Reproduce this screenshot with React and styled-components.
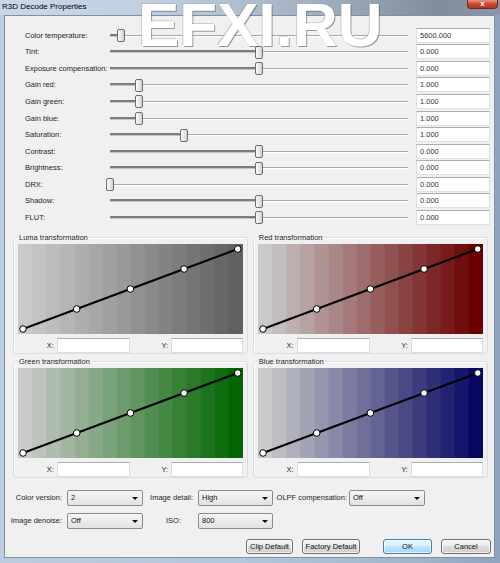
import React from "react";
import styled, { createGlobalStyle } from "styled-components";

const GlobalStyle = createGlobalStyle`
  html, body { margin: 0; padding: 0; background: #fff; }
  body { font-family: "Liberation Sans", Arial, sans-serif; color: #1e1e1e; }
`;

const Window = styled.div`
  position: relative;
  width: 500px;
  height: 563px;
  box-sizing: border-box;
  display: flex;
  flex-direction: column;
  overflow: hidden;
  background: linear-gradient(to right, #bccde1 0%, #b3c5da 50%, #9fb3ca 85%, #8ea3bd 100%);
`;

const TitleBar = styled.div`
  height: 15px;
  flex: none;
  display: flex;
  align-items: flex-start;
  padding: 0 2px 0 2px;
  background: linear-gradient(to right, #c9d7e7 0%, #c0cfe1 30%, #a3b1c1 62%, #7f8c9b 88%, #8a98a9 100%);
`;

const Title = styled.span`
  font-size: 8px;
  line-height: 14px;
  color: #000;
`;

const CloseButton = styled.div`
  margin-left: auto;
  width: 31px;
  height: 9px;
  box-sizing: border-box;
  border: 1px solid #6b2a22;
  border-top: none;
  border-radius: 0 0 4px 4px;
  background: linear-gradient(#e8917f, #c8432e 55%, #b53421);
  color: #fff;
  font-size: 8px;
  font-weight: bold;
  line-height: 8px;
  text-align: center;
`;

const Watermark = styled.div`
  position: absolute;
  left: 138px;
  top: -6px;
  font-size: 62px;
  line-height: 62px;
  font-weight: bold;
  color: #fff;
  text-shadow: 1px 1px 0 rgba(80, 80, 80, 0.55), -1px -1px 0 rgba(170, 170, 170, 0.5);
  pointer-events: none;
  white-space: nowrap;
`;

const Client = styled.div`
  flex: 1;
  margin: 0 5px 5px 4px;
  border: 1px solid #7e90a7;
  background: #f0f0f0;
  display: flex;
  flex-direction: column;
`;

const SliderList = styled.div`
  display: grid;
  grid-template-columns: 85px 298px 82px;
  grid-auto-rows: 16.55px;
  padding: 11px 3px 0 20px;
`;

const Label = styled.span`
  font-size: 7.5px;
  display: flex;
  align-items: center;
  white-space: nowrap;
`;

const Track = styled.div`
  position: relative;
  display: flex;
  align-items: center;
`;

const Filled = styled.div`
  height: 2px;
  background: #7c7c7c;
  border-bottom: 1px solid #c4c4c4;
`;

const Rest = styled.div`
  flex: 1;
  height: 1px;
  background: #a8a8a8;
  box-shadow: 0 1px 0 #ffffff;
`;

const Thumb = styled.div`
  position: absolute;
  top: 50%;
  width: 8px;
  height: 13px;
  margin: -6px 0 0 -4px;
  box-sizing: border-box;
  border: 1px solid #6e6e6e;
  border-radius: 2px;
  background: linear-gradient(to right, #fbfbfb, #e4e4e4 60%, #cfcfcf);
`;

const Field = styled.div`
  align-self: center;
  margin-left: 8px;
  height: 15px;
  box-sizing: border-box;
  border: 1px solid #dbdfe6;
  border-top-color: #abadb3;
  background: #fff;
  padding-left: 3px;
  font-size: 7.5px;
  line-height: 13px;
  color: #333;
`;

const Groups = styled.div`
  display: grid;
  grid-template-columns: 1fr 1fr;
  column-gap: 5px;
  row-gap: 3px;
  margin-top: 7px;
  padding: 0 6.5px 0 8px;
`;

const Group = styled.fieldset`
  margin: 0;
  min-width: 0;
  padding: 0 4px;
  border: 1px solid #d5dfe5;
  border-radius: 3px;
  box-shadow: inset 1px 1px 0 #fff;
`;

const Legend = styled.legend`
  padding: 0 1px;
  font-size: 7.5px;
  line-height: 10px;
`;

const Canvas = styled.svg`
  display: block;
  width: 100%;
  height: 90px;
  margin-top: 1px;
`;

const CoordRow = styled.div`
  display: flex;
  align-items: center;
  margin-top: 4px;
  height: 15px;
`;

const CoordLabel = styled.span`
  width: ${(p) => p.$w}px;
  box-sizing: border-box;
  padding-right: 3px;
  text-align: right;
  font-size: 7.5px;
`;

const CoordInput = styled.div`
  width: ${(p) => p.$w}px;
  height: 15px;
  box-sizing: border-box;
  border: 1px solid #dbdfe6;
  border-top-color: #abadb3;
  background: #fff;
`;

const Controls = styled.div`
  display: grid;
  grid-template-columns: 62px 76px 55px 75px 76px 76px;
  grid-auto-rows: 16px;
  row-gap: 7px;
  margin-top: 12px;
`;

const CtlLabel = styled.span`
  font-size: 7.5px;
  display: flex;
  align-items: center;
  justify-content: ${(p) => (p.$center ? "center" : "flex-end")};
  padding: ${(p) => (p.$center ? "0 0 0 6px" : "0 5px 0 0")};
  white-space: nowrap;
`;

const Select = styled.div`
  position: relative;
  box-sizing: border-box;
  border: 1px solid #8b8b8b;
  border-radius: 2px;
  background: linear-gradient(#f7f7f7, #ececec 50%, #e2e2e2);
  font-size: 7.5px;
  line-height: 14px;
  padding-left: 3px;
  color: #111;

  &::after {
    content: "";
    position: absolute;
    right: 4px;
    top: 6px;
    border-left: 3px solid transparent;
    border-right: 3px solid transparent;
    border-top: 3px solid #111;
  }
`;

const Buttons = styled.div`
  display: flex;
  justify-content: flex-end;
  gap: 9px;
  margin-top: 10px;
  padding-right: 3px;
`;

const Button = styled.div`
  width: ${(p) => p.$w}px;
  height: 15px;
  box-sizing: border-box;
  margin-left: ${(p) => (p.$sep ? 14 : 0)}px;
  border: 1px solid ${(p) => (p.$primary ? "#3c7fb1" : "#707070")};
  border-radius: 3px;
  background: ${(p) =>
    p.$primary
      ? "linear-gradient(#eaf6fd, #d9f0fc 50%, #bee6fd 50%, #a7d9f5)"
      : "linear-gradient(#f2f2f2, #ebebeb 50%, #dddddd 50%, #cfcfcf)"};
  box-shadow: inset 0 0 0 1px rgba(255, 255, 255, 0.7);
  font-size: 7.5px;
  line-height: 13px;
  text-align: center;
  color: #111;
`;

const sliders = [
  ["Color temperature:", 0.037, "5600.000"],
  ["Tint:", 0.5, "0.000"],
  ["Exposure compensation:", 0.5, "0.000"],
  ["Gain red:", 0.097, "1.000"],
  ["Gain green:", 0.097, "1.000"],
  ["Gain blue:", 0.097, "1.000"],
  ["Saturation:", 0.248, "1.000"],
  ["Contrast:", 0.5, "0.000"],
  ["Brightness:", 0.5, "0.000"],
  ["DRX:", 0, "0.000"],
  ["Shadow:", 0.5, "0.000"],
  ["FLUT:", 0.5, "0.000"],
];

const curves = [
  { title: "Luma transformation", to: [96, 96, 96] },
  { title: "Red transformation", to: [106, 0, 0] },
  { title: "Green transformation", to: [2, 102, 2] },
  { title: "Blue transformation", to: [8, 8, 100] },
];

const W = 225;
const H = 90;
const STRIPES = 16;

const mix = (a, b, t) => Math.round(a + (b - a) * t);

const CurveCanvas = ({ to }) => {
  const from = [202, 202, 202];
  const sw = W / STRIPES;
  const pts = [0, 1, 2, 3, 4].map((i) => [5 + (i * (W - 10)) / 4, H - 5 - (i * (H - 10)) / 4]);
  return (
    <Canvas viewBox={`0 0 ${W} ${H}`} preserveAspectRatio="none">
      {Array.from({ length: STRIPES }, (_, i) => {
        const t = i / (STRIPES - 1);
        const c = `rgb(${mix(from[0], to[0], t)},${mix(from[1], to[1], t)},${mix(from[2], to[2], t)})`;
        return <rect key={i} x={i * sw} y={0} width={sw + 0.5} height={H} fill={c} />;
      })}
      <polyline points={pts.map((p) => p.join(",")).join(" ")} fill="none" stroke="#000" strokeWidth="2" />
      {pts.map(([x, y], i) => (
        <circle key={i} cx={x} cy={y} r="3.3" fill="#fff" stroke="#000" strokeWidth="1" />
      ))}
    </Canvas>
  );
};

export default function App() {
  return (
    <>
      <GlobalStyle />
      <Window>
        <TitleBar>
          <Title>R3D Decode Properties</Title>
          <CloseButton>x</CloseButton>
        </TitleBar>
        <Client>
          <SliderList>
            {sliders.map(([label, frac, value]) => (
              <React.Fragment key={label}>
                <Label>{label}</Label>
                <Track>
                  <Filled style={{ width: `${frac * 100}%` }} />
                  <Rest />
                  <Thumb style={{ left: `${frac * 100}%` }} />
                </Track>
                <Field>{value}</Field>
              </React.Fragment>
            ))}
          </SliderList>

          <Groups>
            {curves.map((c) => (
              <Group key={c.title}>
                <Legend>{c.title}</Legend>
                <CurveCanvas to={c.to} />
                <CoordRow>
                  <CoordLabel $w={39}>X:</CoordLabel>
                  <CoordInput $w={74} />
                  <CoordLabel $w={41}>Y:</CoordLabel>
                  <CoordInput $w={72} />
                </CoordRow>
              </Group>
            ))}
          </Groups>

          <Controls>
            <CtlLabel>Color version:</CtlLabel>
            <Select>2</Select>
            <CtlLabel>Image detail:</CtlLabel>
            <Select>High</Select>
            <CtlLabel style={{ paddingRight: 2 }}>OLPF compensation:</CtlLabel>
            <Select>Off</Select>
            <CtlLabel>Image denoise:</CtlLabel>
            <Select>Off</Select>
            <CtlLabel $center>ISO:</CtlLabel>
            <Select>800</Select>
          </Controls>

          <Buttons>
            <Button $w={47}>Clip Default</Button>
            <Button $w={58}>Factory Default</Button>
            <Button $w={49} $sep $primary>OK</Button>
            <Button $w={50}>Cancel</Button>
          </Buttons>
        </Client>
        <Watermark>EFXI.RU</Watermark>
      </Window>
    </>
  );
}
